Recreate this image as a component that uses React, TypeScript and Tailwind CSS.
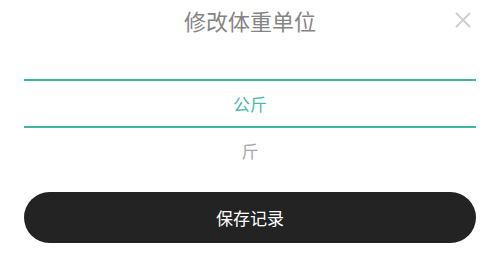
import React from "react";

export default function App() {
  const font = { fontFamily: '"Noto Sans CJK SC", "Noto Sans", sans-serif' };
  return (
    <div className="w-[500px] h-[260px] bg-white overflow-hidden" style={font}>
      <div className="relative h-[40px] flex items-center justify-center">
        <span className="text-[22px] leading-none text-[#858585]">修改体重单位</span>
        <svg className="absolute left-[455px] top-[12px]" width="16" height="16" viewBox="0 0 16 16">
          <path d="M1.5 1.5 L14.5 14.5 M14.5 1.5 L1.5 14.5" stroke="#cfcfcf" strokeWidth="2" strokeLinecap="round" />
        </svg>
      </div>
      <div className="mx-[24px] mt-[39px] flex flex-col">
        <div className="h-[49px] border-y-2 border-[#3db6a2] flex items-center justify-center">
          <span className="text-[17px] leading-none text-[#4db8a4]">公斤</span>
        </div>
        <div className="h-[44px] flex items-center justify-center">
          <span className="text-[17px] leading-none text-[#a8a8a8]">斤</span>
        </div>
      </div>
      <div className="mx-[24px] mt-[20px] h-[51px] rounded-full bg-[#232323] flex items-center justify-center">
        <span className="text-[17px] leading-none text-white">保存记录</span>
      </div>
    </div>
  );
}
